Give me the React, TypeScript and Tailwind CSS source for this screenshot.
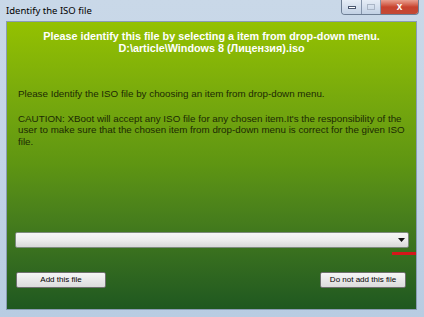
export default function App() {
  return (
    <div className="w-[424px] h-[317px] bg-[#aebfd2] overflow-hidden relative" style={{ fontFamily: '"Liberation Sans", Arial, sans-serif' }}>
      <div className="absolute inset-0 bg-gradient-to-b from-[#c9d8e8] via-[#c3d4e7] to-[#b8cce2]" />
      <div className="relative flex flex-col h-full">
        {/* title bar */}
        <div className="h-[21px] flex items-start justify-between pl-[6px] pr-[5px]">
          <span className="text-[9.5px] leading-[11px] mt-[5px] text-black" style={{ fontFamily: '"Noto Sans", sans-serif' }}>Identify the ISO file</span>
          <div className="flex h-[15px] border border-[#6d7e94] border-t-0 rounded-b-[4px] overflow-hidden">
            <div className="w-[20px] bg-gradient-to-b from-[#e6edf6] to-[#c2d1e4] flex items-center justify-center border-r border-[#8494aa]">
              <div className="w-[8px] h-[3px] bg-[#fff] border border-[#4a5870]" />
            </div>
            <div className="w-[19px] bg-gradient-to-b from-[#e6edf6] to-[#c2d1e4] flex items-center justify-center border-r border-[#8494aa]">
              <div className="w-[8px] h-[6px] border border-[#aab6c6]" />
            </div>
            <div className="w-[37px] bg-gradient-to-b from-[#e8a090] via-[#c8422e] to-[#c24a36] flex items-center justify-center">
              <span className="text-white text-[10px] leading-none font-bold">x</span>
            </div>
          </div>
        </div>
        {/* client */}
        <div className="mx-[6px] w-[411px] h-[289px] border border-[#8a9cb3] bg-gradient-to-b from-[#94c100] via-[#5e9512] to-[#1f5820] flex flex-col">
          <div className="pt-[8px] h-[31px] text-center text-white font-bold text-[10.8px] leading-[12px]">
            <div>Please identify this file by selecting a item from drop-down menu.</div>
            <div>D:\article\Windows 8 (Лицензия).iso</div>
          </div>
          <div className="mt-[35px] h-[144px] pl-[11px] pr-[3px] text-[9.8px] leading-[11.5px] text-[#1c2a04]">
            <div>Please Identify the ISO file by choosing an item from drop-down menu.</div>
            <div className="mt-[13px]">CAUTION: XBoot will accept any ISO file for any chosen item.It's the responsibility of the user to make sure that the chosen item from drop-down menu is correct for the given ISO file.</div>
          </div>
          <div className="ml-[8px] w-[394px] h-[16px] border border-[#7d8a7d] rounded-[2px] bg-gradient-to-b from-[#f6f6f6] via-[#ececec] to-[#d8d8d8] flex items-center justify-end pr-[3px]">
            <svg width="7" height="4" viewBox="0 0 7 4"><path d="M0 0h7L3.5 4z" fill="#111" /></svg>
          </div>
          <div className="flex justify-end mt-[4px]">
            <div className="w-[24px] h-[3px] bg-[#d4161a]" />
          </div>
          <div className="flex justify-between mt-[17px] pl-[9px] pr-[10px]">
            <div className="w-[90px] h-[16px] border border-[#707070] rounded-[2px] bg-gradient-to-b from-[#f6f6f6] to-[#dcdcdc] flex items-center justify-center text-[8px] text-black">Add this file</div>
            <div className="w-[86px] h-[16px] border border-[#707070] rounded-[2px] bg-gradient-to-b from-[#f6f6f6] to-[#dcdcdc] flex items-center justify-center text-[8px] text-black">Do not add this file</div>
          </div>
        </div>
      </div>
    </div>
  );
}
